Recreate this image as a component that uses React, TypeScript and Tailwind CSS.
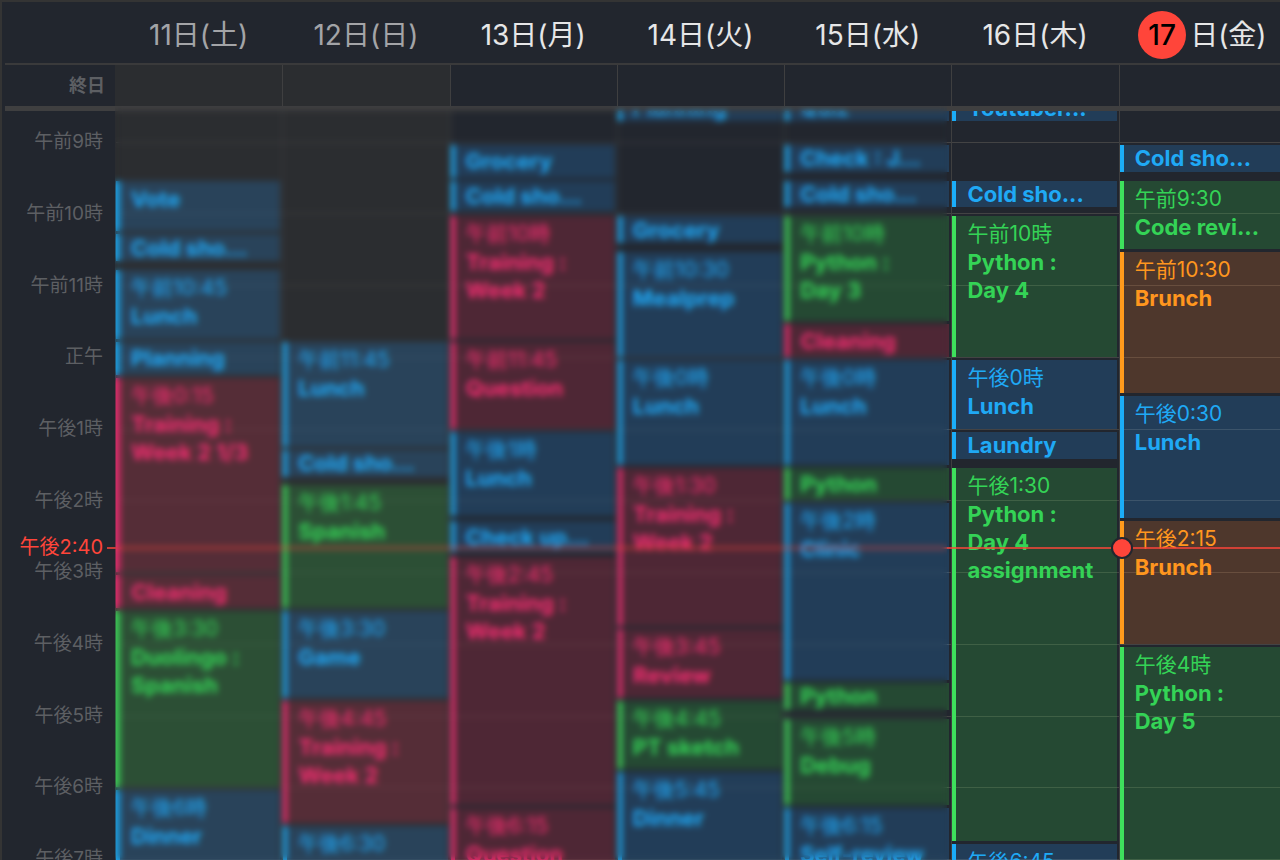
type Tone = "blue" | "green" | "pink" | "orange"

type CalendarEvent = {
  start: string
  end: string
  title?: string
  time?: string
  tone: Tone
}

type Day = {
  date: number
  weekday: string
  weekend?: boolean
  today?: boolean
  events: CalendarEvent[]
}

const DAY_START = 8 * 60
const DAY_END = 19 * 60 + 30
const NOW = "14:39"

const tones: Record<Tone, string> = {
  blue: "border-[#1badf8] bg-[#2492f0]/22 text-[#1fa9f5]",
  green: "border-[#3ee05c] bg-[#32d74b]/20 text-[#34d356]",
  pink: "border-[#f82d74] bg-[#ff2d55]/20 text-[#f02d70]",
  orange: "border-[#ff9a1c] bg-[#ff7f26]/20 text-[#ff961e]",
}

const hours = [
  { at: "09:00", label: "午前9時" },
  { at: "10:00", label: "午前10時" },
  { at: "11:00", label: "午前11時" },
  { at: "12:00", label: "正午" },
  { at: "13:00", label: "午後1時" },
  { at: "14:00", label: "午後2時" },
  { at: "15:00", label: "午後3時" },
  { at: "16:00", label: "午後4時" },
  { at: "17:00", label: "午後5時" },
  { at: "18:00", label: "午後6時" },
  { at: "19:00", label: "午後7時" },
]

const days: Day[] = [
  {
    date: 11,
    weekday: "土",
    weekend: true,
    events: [
      { start: "09:30", end: "10:15", title: "Vote", tone: "blue" },
      { start: "10:15", end: "10:40", title: "Cold sho...", tone: "blue" },
      { start: "10:45", end: "11:45", time: "午前10:45", title: "Lunch", tone: "blue" },
      { start: "11:45", end: "12:15", title: "Planning", tone: "blue" },
      { start: "12:15", end: "15:00", time: "午後0:15", title: "Training :\nWeek 2 1/3", tone: "pink" },
      { start: "15:00", end: "15:30", title: "Cleaning", tone: "pink" },
      { start: "15:30", end: "18:00", time: "午後3:30", title: "Duolingo :\nSpanish", tone: "green" },
      { start: "18:00", end: "19:30", time: "午後6時", title: "Dinner", tone: "blue" },
    ],
  },
  {
    date: 12,
    weekday: "日",
    weekend: true,
    events: [
      { start: "11:45", end: "13:15", time: "午前11:45", title: "Lunch", tone: "blue" },
      { start: "13:15", end: "13:40", title: "Cold sho...", tone: "blue" },
      { start: "13:45", end: "15:30", time: "午後1:45", title: "Spanish", tone: "green" },
      { start: "15:30", end: "16:45", time: "午後3:30", title: "Game", tone: "blue" },
      { start: "16:45", end: "18:30", time: "午後4:45", title: "Training :\nWeek 2", tone: "pink" },
      { start: "18:30", end: "19:30", time: "午後6:30", tone: "blue" },
    ],
  },
  {
    date: 13,
    weekday: "月",
    events: [
      { start: "09:00", end: "09:30", title: "Grocery", tone: "blue" },
      { start: "09:30", end: "09:58", title: "Cold sho...", tone: "blue" },
      { start: "10:00", end: "11:45", time: "午前10時", title: "Training :\nWeek 2", tone: "pink" },
      { start: "11:45", end: "13:00", time: "午前11:45", title: "Question", tone: "pink" },
      { start: "13:00", end: "14:13", time: "午後1時", title: "Lunch", tone: "blue" },
      { start: "14:15", end: "14:43", title: "Check up...", tone: "blue" },
      { start: "14:45", end: "18:15", time: "午後2:45", title: "Training :\nWeek 2", tone: "pink" },
      { start: "18:15", end: "19:30", time: "午後6:15", title: "Question", tone: "pink" },
    ],
  },
  {
    date: 14,
    weekday: "火",
    events: [
      { start: "08:18", end: "08:43", title: "Planning", tone: "blue" },
      { start: "10:00", end: "10:25", title: "Grocery", tone: "blue" },
      { start: "10:30", end: "12:00", time: "午前10:30", title: "Mealprep", tone: "blue" },
      { start: "12:00", end: "13:30", time: "午後0時", title: "Lunch", tone: "blue" },
      { start: "13:30", end: "15:45", time: "午後1:30", title: "Training :\nWeek 2", tone: "pink" },
      { start: "15:45", end: "16:45", time: "午後3:45", title: "Review", tone: "pink" },
      { start: "16:45", end: "17:45", time: "午後4:45", title: "PT sketch", tone: "green" },
      { start: "17:45", end: "19:30", time: "午後5:45", title: "Dinner", tone: "blue" },
    ],
  },
  {
    date: 15,
    weekday: "水",
    events: [
      { start: "08:18", end: "08:43", title: "Quiz", tone: "blue" },
      { start: "09:00", end: "09:25", title: "Check : J...", tone: "blue" },
      { start: "09:30", end: "09:55", title: "Cold sho...", tone: "blue" },
      { start: "10:00", end: "11:30", time: "午前10時", title: "Python :\nDay 3", tone: "green" },
      { start: "11:30", end: "12:00", title: "Cleaning", tone: "pink" },
      { start: "12:00", end: "13:30", time: "午後0時", title: "Lunch", tone: "blue" },
      { start: "13:30", end: "14:00", title: "Python", tone: "green" },
      { start: "14:00", end: "16:30", time: "午後2時", title: "Clinic", tone: "blue" },
      { start: "16:30", end: "16:55", title: "Python", tone: "green" },
      { start: "17:00", end: "18:15", time: "午後5時", title: "Debug", tone: "green" },
      { start: "18:15", end: "19:30", time: "午後6:15", title: "Self-review", tone: "blue" },
    ],
  },
  {
    date: 16,
    weekday: "木",
    events: [
      { start: "08:18", end: "08:43", title: "Youtuber...", tone: "blue" },
      { start: "09:30", end: "09:55", title: "Cold sho...", tone: "blue" },
      { start: "10:00", end: "12:00", time: "午前10時", title: "Python :\nDay 4", tone: "green" },
      { start: "12:00", end: "13:00", time: "午後0時", title: "Lunch", tone: "blue" },
      { start: "13:00", end: "13:25", title: "Laundry", tone: "blue" },
      { start: "13:30", end: "18:45", time: "午後1:30", title: "Python :\nDay 4\nassignment", tone: "green" },
      { start: "18:45", end: "19:30", time: "午後6:45", tone: "blue" },
    ],
  },
  {
    date: 17,
    weekday: "金",
    today: true,
    events: [
      { start: "09:00", end: "09:25", title: "Cold sho...", tone: "blue" },
      { start: "09:30", end: "10:30", time: "午前9:30", title: "Code revi...", tone: "green" },
      { start: "10:30", end: "12:30", time: "午前10:30", title: "Brunch", tone: "orange" },
      { start: "12:30", end: "14:15", time: "午後0:30", title: "Lunch", tone: "blue" },
      { start: "14:15", end: "16:00", time: "午後2:15", title: "Brunch", tone: "orange" },
      { start: "16:00", end: "19:30", time: "午後4時", title: "Python :\nDay 5", tone: "green" },
    ],
  },
]

const toMinutes = (time: string) => {
  const [h, m] = time.split(":").map(Number)
  return h * 60 + m
}

// One grid row per minute, row 1 is DAY_START
const toRow = (time: string) => toMinutes(time) - DAY_START + 1

const minuteRows = {
  gridTemplateRows: `repeat(${DAY_END - DAY_START}, minmax(0, 1fr))`,
}

// Gutter plus seven days; the last day runs slightly past the window edge
const weekColumns = "-mr-[6px] grid grid-cols-[113px_repeat(7,minmax(0,1fr))]"

function DayHeading({ day }: { day: Day }) {
  return (
    <h2
      className={`flex items-center justify-center text-[28px] whitespace-nowrap ${
        day.weekend ? "text-[#a3a4a7]" : "text-[#e6e6e7]"
      }`}
    >
      {day.today ? (
        <span className="mr-1 flex size-12 items-center justify-center rounded-full bg-[#ff453a] font-medium text-black">
          {day.date}
        </span>
      ) : (
        <span>{day.date}</span>
      )}
      <span>日({day.weekday})</span>
    </h2>
  )
}

function EventBlock({ event }: { event: CalendarEvent }) {
  const { start, end, time, title, tone } = event
  const isShort = toMinutes(end) - toMinutes(start) <= 30

  return (
    <article
      className={`col-start-1 mt-[3px] mr-[2px] flex min-w-0 flex-col overflow-hidden border-l-4 pl-[11px] leading-7 ${
        isShort ? "justify-center" : "pt-1"
      } ${tones[tone]}`}
      style={{ gridRow: `${toRow(start)} / ${toRow(end)}` }}
    >
      {time && <time className="text-[21px] whitespace-nowrap">{time}</time>}
      {title && <h3 className="text-[22px] font-bold whitespace-pre">{title}</h3>}
    </article>
  )
}

function DayColumn({ day }: { day: Day }) {
  return (
    <section
      className={`grid min-h-0 grid-cols-1 border-l border-[#3f3f40] first-of-type:border-transparent ${
        day.weekend ? "bg-[#2b2d30]" : ""
      }`}
      style={minuteRows}
    >
      {hours.map((hour) => (
        <div
          key={hour.at}
          className="col-start-1 h-0 border-t border-[#434344]"
          style={{ gridRow: toRow(hour.at) }}
        />
      ))}
      {day.events.map((event) => (
        <EventBlock key={event.start} event={event} />
      ))}
    </section>
  )
}

function HourGutter() {
  return (
    <div className="grid min-h-0 grid-cols-1 pt-px pr-3 text-[19px] text-[#5d5f63]" style={minuteRows}>
      {hours.map((hour) => (
        <div
          key={hour.at}
          className="col-start-1 flex h-0 items-center justify-end whitespace-nowrap"
          style={{ gridRow: toRow(hour.at) }}
        >
          {hour.label}
        </div>
      ))}
      <div
        className="col-start-1 flex h-0 items-center justify-end text-[20px] whitespace-nowrap text-[#ff453a]"
        style={{ gridRow: toRow(NOW) }}
      >
        午後2:40
      </div>
    </div>
  )
}

function NowLine() {
  const row = toRow(NOW)

  return (
    <div
      className="pointer-events-none absolute inset-0 grid grid-cols-[113px_repeat(7,minmax(0,1fr))]"
      style={minuteRows}
    >
      <div
        className="col-span-full col-start-1 ml-[105px] h-[2px] bg-[#ff453a]/75"
        style={{ gridRow: row }}
      />
      <div className="col-start-8 flex h-[2px] items-center" style={{ gridRow: row }}>
        <span className="-ml-2 size-[22px] shrink-0 rounded-full border-2 border-[#22262e] bg-[#ff453a]" />
      </div>
    </div>
  )
}

export default function App() {
  return (
    <main className="flex h-screen flex-col overflow-hidden border-t-2 border-l-2 border-[#343434] bg-[#22262e] font-[Inter,'Noto_Sans_CJK_JP',sans-serif]">
      <header className="shrink-0">
        <div className={`${weekColumns} h-[61px] pt-1`}>
          <div />
          {days.map((day) => (
            <DayHeading key={day.date} day={day} />
          ))}
        </div>
        <div className="ml-[3px] h-[2px] bg-[#3a3a3b]" />
        <div className={`${weekColumns} h-[41px]`}>
          <div className="flex items-center justify-end pr-[10px] text-[18px] font-bold text-[#5d5f63]">
            終日
          </div>
          {days.map((day, index) => (
            <div
              key={day.date}
              className={`border-l ${index === 0 ? "border-transparent" : "border-[#3f3f40]"} ${
                day.weekend ? "bg-[#2b2d30]" : ""
              }`}
            />
          ))}
        </div>
      </header>

      <div className="relative flex min-h-0 flex-1 flex-col overflow-hidden">
        <div className="ml-[3px] h-[5px] shrink-0 bg-[#3f3f40]" />
        <div className="min-h-0 flex-1 overflow-hidden">
          <div className={`${weekColumns} relative -mt-[41px] h-[825px] grid-rows-[minmax(0,1fr)]`}>
            <HourGutter />
            {days.map((day) => (
              <DayColumn key={day.date} day={day} />
            ))}
            <NowLine />
          </div>
        </div>

        {/* Frosted cover over the first five days */}
        <div className="pointer-events-none absolute inset-0">
          <div className={`${weekColumns} h-full`}>
            <div className="col-span-5 col-start-2 mr-1 backdrop-blur-[3px]" />
          </div>
        </div>
      </div>
    </main>
  )
}
